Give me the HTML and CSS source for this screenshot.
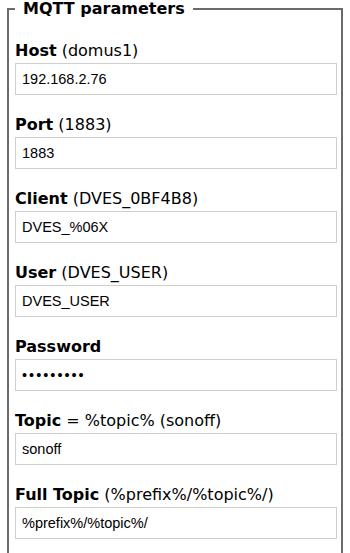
FILE: index.html
```html
<!DOCTYPE html>
<html lang="en">
<head>
    <meta charset="UTF-8">
    <meta name="viewport" content="width=device-width, initial-scale=1.0">
    <title>MQTT parameters</title>
    <link rel="stylesheet" href="styles.css">
</head>
<body>
    <fieldset class="params">
        <legend>MQTT parameters</legend>

        <p class="field"><b>Host</b> (domus1)<br>
            <input type="text" value="192.168.2.76"></p>

        <p class="field"><b>Port</b> (1883)<br>
            <input type="text" value="1883"></p>

        <p class="field"><b>Client</b> (DVES_0BF4B8)<br>
            <input type="text" value="DVES_%06X"></p>

        <p class="field"><b>User</b> (DVES_USER)<br>
            <input type="text" value="DVES_USER"></p>

        <p class="field"><b>Password</b><br>
            <input type="password" class="secret" value="*********"></p>

        <p class="field"><b>Topic</b> = %topic% (sonoff)<br>
            <input type="text" value="sonoff"></p>

        <p class="field"><b>Full Topic</b> (%prefix%/%topic%/)<br>
            <input type="text" value="%prefix%/%topic%/"></p>
    </fieldset>
</body>
</html>
```

FILE: styles.css
```css
body {
    margin: 0;
    font-family: "DejaVu Sans", Verdana, sans-serif;
    font-size: 16px;
    color: #000;
    background-color: #fff;
}

.params {
    margin: 0 7px;
    padding: 23px 4px 20px 6px;
    border: 2px solid #6b6b6b;
}

.params legend {
    padding: 0 8px;
    font-weight: bold;
    font-size: 16px;
    line-height: 18px;
}

.field {
    margin: 0 0 20px;
    line-height: 20px;
}

.field input {
    display: block;
    box-sizing: border-box;
    width: 100%;
    height: 32px;
    margin-top: 2px;
    padding: 0 6px;
    border: 1px solid #cfcfcf;
    font-family: "Liberation Sans", Arial, sans-serif;
    font-size: 14.5px;
    color: #000;
    background-color: #fff;
}

.field input.secret {
    letter-spacing: 2px;
}
```
